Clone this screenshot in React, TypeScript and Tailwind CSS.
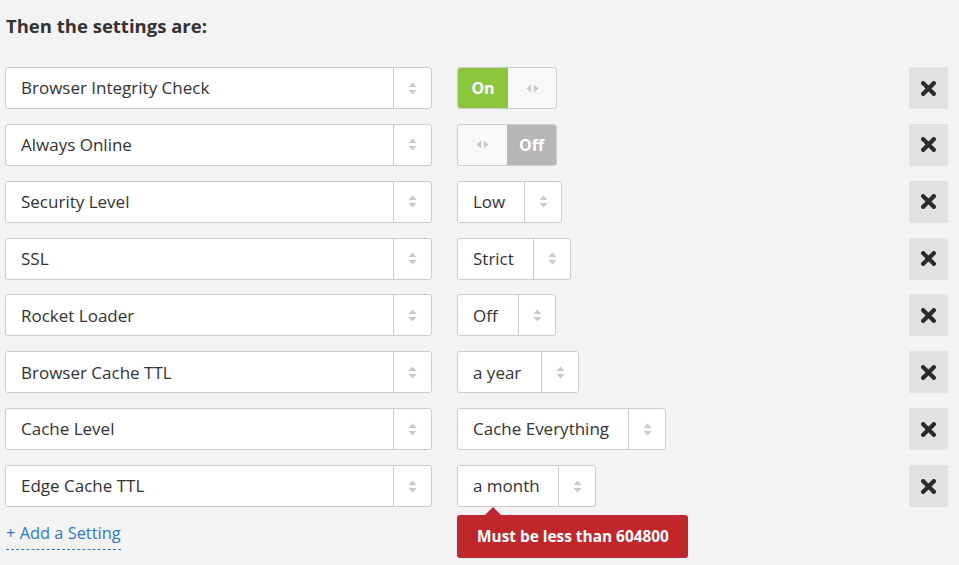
import React from "react";

const font = { fontFamily: '"Open Sans", "Noto Sans", Arial, sans-serif' };

function UpDown() {
  return (
    <svg width="9" height="13" viewBox="0 0 9 13" aria-hidden="true">
      <path d="M4.5 0.5 L8.5 5 L0.5 5 Z" fill="#c9c9c9" />
      <path d="M4.5 12.5 L8.5 8 L0.5 8 Z" fill="#c9c9c9" />
    </svg>
  );
}

function LeftRight() {
  return (
    <svg width="13" height="9" viewBox="0 0 13 9" aria-hidden="true">
      <path d="M0.5 4.5 L5 0.5 L5 8.5 Z" fill="#c9c9c9" />
      <path d="M12.5 4.5 L8 0.5 L8 8.5 Z" fill="#c9c9c9" />
    </svg>
  );
}

function Times() {
  return (
    <svg width="15" height="15" viewBox="0 0 15 15" aria-hidden="true">
      <path d="M2.2 2.2 L12.8 12.8 M12.8 2.2 L2.2 12.8" stroke="#2b2b2b" strokeWidth="4.2" strokeLinecap="square" />
    </svg>
  );
}

function Select({ label, width, arrowW = 37 }: { label: string; width: string; arrowW?: number }) {
  return (
    <div className={`flex h-[42px] ${width} shrink-0 overflow-hidden rounded-[3px] border border-[#cccccc] bg-white`}>
      <div className="flex flex-1 items-center whitespace-nowrap pl-[15px] text-[17px] text-[#333333]">{label}</div>
      <div
        className="flex items-center justify-center border-l border-[#cccccc]"
        style={{ width: arrowW }}
      >
        <UpDown />
      </div>
    </div>
  );
}

function Toggle({ on }: { on: boolean }) {
  return (
    <div className="flex h-[42px] w-[100px] shrink-0 overflow-hidden rounded-[3px] border border-[#cccccc] bg-[#f8f8f8]">
      {on ? (
        <>
          <div className="flex w-[50px] items-center justify-center bg-[#8cc63f] text-[16px] font-bold text-white">On</div>
          <div className="flex flex-1 items-center justify-center">
            <LeftRight />
          </div>
        </>
      ) : (
        <>
          <div className="flex w-[49px] items-center justify-center">
            <LeftRight />
          </div>
          <div className="flex flex-1 items-center justify-center bg-[#b6b6b6] text-[16px] font-bold text-white">Off</div>
        </>
      )}
    </div>
  );
}

type Row = { name: string; control: React.ReactNode; tip?: string };

const rows: Row[] = [
  { name: "Browser Integrity Check", control: <Toggle on /> },
  { name: "Always Online", control: <Toggle on={false} /> },
  { name: "Security Level", control: <Select label="Low" width="w-[105px]" /> },
  { name: "SSL", control: <Select label="Strict" width="w-[114px]" /> },
  { name: "Rocket Loader", control: <Select label="Off" width="w-[99px]" /> },
  { name: "Browser Cache TTL", control: <Select label="a year" width="w-[122px]" /> },
  { name: "Cache Level", control: <Select label="Cache Everything" width="w-[209px]" /> },
  { name: "Edge Cache TTL", control: <Select label="a month" width="w-[139px]" />, tip: "Must be less than 604800" },
];

export default function App() {
  return (
    <div className="min-h-[565px] w-full bg-[#f3f3f3] pl-[5px] pr-[11px]" style={font}>
      <h3 className="pl-px pt-[14px] text-[18.5px] font-bold leading-[24px] text-[#333333]">Then the settings are:</h3>
      <div className="mt-[29px] flex flex-col gap-[14.86px]">
        {rows.map((r) => (
          <div key={r.name} className="flex items-start">
            <Select label={r.name} width="w-[427px]" arrowW={38} />
            <div className="relative ml-[25px] flex-1">
              {r.control}
              {r.tip && (
                <div className="absolute left-0 top-[50px] z-10 flex h-[43px] w-[231px] items-center whitespace-nowrap rounded-[3px] bg-[#c0272d] pl-[20px] text-[15.4px] font-bold text-white">
                  <span className="absolute -top-[8px] left-[28px] h-0 w-0 border-x-[8px] border-b-[8px] border-x-transparent border-b-[#c0272d]" />
                  {r.tip}
                </div>
              )}
            </div>
            <button className="flex h-[42px] w-[39px] shrink-0 items-center justify-center rounded-[2px] bg-[#e1e1e1]">
              <Times />
            </button>
          </div>
        ))}
      </div>
      <div className="mt-[14px] pl-px">
        <span className="border-b border-dashed border-[#2f7bbf] pb-[5px] text-[16.4px] leading-[22px] text-[#2f7bbf]">+ Add a Setting</span>
      </div>
    </div>
  );
}
